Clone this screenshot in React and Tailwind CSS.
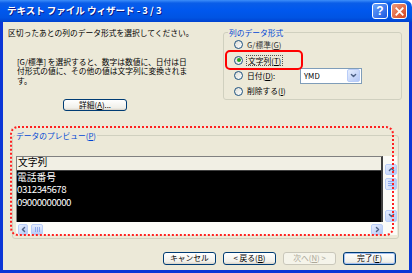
const jp = "font-['Noto_Sans_CJK_JP',sans-serif]";

const Radio = ({ checked }) => (
  <span className="w-[9px] h-[9px] rounded-full border border-[#1c5180] bg-[linear-gradient(135deg,#dcdcd5,#ffffff)] flex items-center justify-center shrink-0">
    {checked && <span className="w-[4px] h-[4px] rounded-full bg-[#21a121]" />}
  </span>
);

const Chevron = ({ dir }) => {
  const d = {
    up: "M2 6.5 L5 3.5 L8 6.5",
    down: "M2 3.5 L5 6.5 L8 3.5",
    left: "M6.5 2 L3.5 5 L6.5 8",
    right: "M3.5 2 L6.5 5 L3.5 8",
  }[dir];
  return (
    <svg width="7" height="7" viewBox="0 0 10 10">
      <path d={d} fill="none" stroke="#4d6185" strokeWidth="2" strokeLinecap="round" strokeLinejoin="round" />
    </svg>
  );
};

const ScrollBtn = ({ dir, className = "" }) => (
  <div className={`rounded-[2px] border border-[#b9cdf8] bg-[linear-gradient(135deg,#e6eefe,#b3c7f6)] flex items-center justify-center shrink-0 ${className}`}>
    <Chevron dir={dir} />
  </div>
);

const WizBtn = ({ children, disabled, isDefault }) => (
  <div
    className={`w-[53px] h-[13px] flex items-center justify-center rounded-[3px] border text-[7.75px] leading-none ${
      disabled
        ? "border-[#c9c7ba] text-[#aca899] bg-[#f5f4ea]"
        : "border-[#003c74] text-black bg-[linear-gradient(180deg,#ffffff,#f0efe9_80%,#d8d2c6)]"
    } ${isDefault ? "shadow-[inset_0_0_0_1px_#a4c0f2]" : ""}`}
  >
    {children}
  </div>
);

export default function App() {
  return (
    <div className={`relative w-[412px] h-[273px] overflow-hidden rounded-tr-[7px] flex flex-col ${jp}`}>
      {/* title bar */}
      <div className="h-[22px] shrink-0 flex items-center pl-[7px] pr-[5px] bg-[linear-gradient(180deg,#3d8ef9_0%,#0a5de8_14%,#0058ee_45%,#0054e3_80%,#0042d0_100%)]">
        <span className="flex-1 text-white font-bold text-[9.5px] leading-none whitespace-pre [text-shadow:1px_1px_#0a1883]">
          テキスト ファイル ウィザード - 3 / 3
        </span>
        <div className="flex gap-[3px]">
          <div className="w-[16px] h-[16px] rounded-[3px] border border-white bg-[linear-gradient(135deg,#6aa5fb,#1c56e0)] flex items-center justify-center text-white font-bold text-[12px] leading-none font-['Liberation_Sans',sans-serif]">
            ?
          </div>
          <div className="w-[16px] h-[16px] rounded-[3px] border border-white bg-[linear-gradient(135deg,#ee9a7c,#d5431d)] flex items-center justify-center">
            <svg width="9" height="9" viewBox="0 0 10 10">
              <path d="M1.5 1.5 L8.5 8.5 M8.5 1.5 L1.5 8.5" stroke="#fff" strokeWidth="2" strokeLinecap="square" />
            </svg>
          </div>
        </div>
      </div>

      <div className="flex flex-1">
        <div className="w-[3px] bg-[#0b36d6]" />
        <div className="flex-1 bg-[#ece9d8] flex flex-col text-[7.75px] text-black">
          {/* top section */}
          <div className="flex">
            <div className="w-[220px] pl-[5px] pt-[6px] flex flex-col items-start">
              <p className="leading-[9px] whitespace-nowrap">区切ったあとの列のデータ形式を選択してください。</p>
              <p className="mt-[19.5px] ml-[9px] leading-[9.5px] whitespace-nowrap">
                [G/標準] を選択すると、数字は数値に、日付は日
                <br />
                付形式の値に、その他の値は文字列に変換されま
                <br />
                す。
              </p>
              <div className="mt-[13.5px] ml-[55px] w-[64px] h-[12px] flex items-center justify-center rounded-[3px] border border-[#003c74] bg-[linear-gradient(180deg,#ffffff,#f0efe9_80%,#d8d2c6)] leading-none">
                詳細(<u>A</u>)...
              </div>
            </div>

            <fieldset className="mt-[6px] w-[179px] h-[72px] border border-[#d0d0bf] rounded-[3px] px-[4px]">
              <legend className="px-[1px] text-[#0046d5] leading-[9px]">列のデータ形式</legend>
              <div className="pl-[6px] flex flex-col">
                <div className="h-[15.5px] flex items-center gap-[4px] text-[#333]">
                  <Radio />
                  <span>
                    G/標準(<u>G</u>)
                  </span>
                </div>
                <div className="h-[15.5px] flex items-center gap-[3px]">
                  <Radio checked />
                  <span className="border border-dotted border-[#555] px-[1px] leading-[9px]">
                    文字列(<u>T</u>)
                  </span>
                </div>
                <div className="h-[15.5px] flex items-center gap-[4px]">
                  <Radio />
                  <span className="w-[49px]">
                    日付(<u>D</u>):
                  </span>
                  <div className="w-[62px] h-[16px] border border-[#7f9db9] bg-white flex items-center pl-[3px] pr-[1px]">
                    <span className="flex-1">YMD</span>
                    <ScrollBtn dir="down" className="w-[13px] h-[13px]" />
                  </div>
                </div>
                <div className="h-[15.5px] flex items-center gap-[4px]">
                  <Radio />
                  <span>
                    削除する(<u>I</u>)
                  </span>
                </div>
              </div>
            </fieldset>
          </div>

          {/* preview */}
          <fieldset className="mt-[20.5px] ml-[9px] w-[387px] h-[108px] border border-[#d0d0bf] rounded-[3px] pl-[3px] pr-[1px]">
            <legend className="-ml-[1px] px-[1px] text-[#0046d5] leading-[9px]">
              データのプレビュー(<u>P</u>)
            </legend>
            <div className="mt-[15.5px] h-[79px] bg-[#fbfbf7] flex flex-col">
              <div className="flex h-[66px]">
                <div className="w-[367px] flex flex-col border-t border-l border-[#808080] border-r-2 border-r-[#404040]">
                  <div className="h-[14px] bg-[#f1efe4] border-b border-[#404040] flex items-center pl-[1px] text-[9.75px] leading-none">
                    文字列
                  </div>
                  <div className="flex-1 bg-black text-white text-[9.75px] leading-none pt-[1px]">
                    <div className="h-[12.5px] flex items-center">電話番号</div>
                    <div className="h-[12.5px] flex items-center tracking-[-0.5px]">0312345678</div>
                    <div className="h-[12.5px] flex items-center tracking-[-0.5px]">09000000000</div>
                  </div>
                </div>
                <div className="ml-[2px] w-[12px] pt-[8px] flex flex-col">
                  <ScrollBtn dir="up" className="h-[11px]" />
                  <div className="mt-[3px] h-[12px] rounded-[2px] border border-[#b9cdf8] bg-[linear-gradient(90deg,#e6eefe,#b8cbf7)] flex flex-col items-center justify-center gap-[1px]">
                    <span className="w-[6px] h-px bg-[#8faaed]" />
                    <span className="w-[6px] h-px bg-[#8faaed]" />
                    <span className="w-[6px] h-px bg-[#8faaed]" />
                  </div>
                  <div className="flex-1" />
                  <ScrollBtn dir="down" className="h-[12px]" />
                </div>
              </div>
              <div className="mt-[2px] h-[11px] flex pl-[2px]">
                <ScrollBtn dir="left" className="w-[10px]" />
                <div className="ml-[3px] w-[12px] rounded-[2px] border border-[#b9cdf8] bg-[linear-gradient(180deg,#e6eefe,#b8cbf7)] flex items-center justify-center gap-[1px]">
                  <span className="w-px h-[5px] bg-[#8faaed]" />
                  <span className="w-px h-[5px] bg-[#8faaed]" />
                  <span className="w-px h-[5px] bg-[#8faaed]" />
                </div>
                <div className="flex-1" />
                <ScrollBtn dir="right" className="w-[12px]" />
                <div className="w-[14px]" />
              </div>
            </div>
          </fieldset>

          {/* buttons */}
          <div className="mt-[12.5px] flex justify-end gap-[7px] pr-[13px]">
            <WizBtn>キャンセル</WizBtn>
            <WizBtn>
              &lt; 戻る(<u>B</u>)
            </WizBtn>
            <WizBtn disabled>
              次へ(<u>N</u>) &gt;
            </WizBtn>
            <WizBtn isDefault>
              完了(<u>F</u>)
            </WizBtn>
          </div>
        </div>
        <div className="w-[3px] bg-[#0b36d6]" />
      </div>
      <div className="h-[3px] shrink-0 bg-[#0b36d6]" />

      {/* annotations */}
      <div className="absolute left-[225px] top-[50px] w-[78px] h-[20px] border-2 border-[#ff0000] rounded-[5px]" />
      <div className="absolute left-[10px] top-[126px] w-[384px] h-[110px] border-2 border-dotted border-[#ff2020] rounded-[8px]" />
    </div>
  );
}
